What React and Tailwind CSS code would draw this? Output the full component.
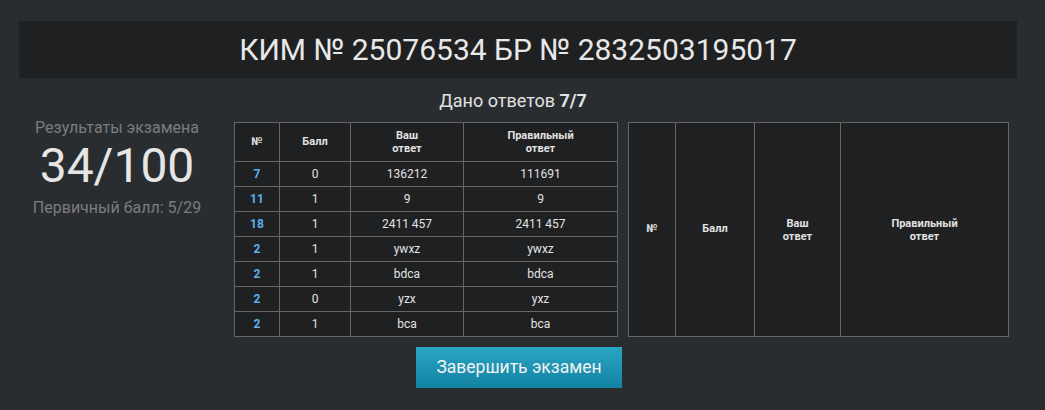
const rows = [
  { n: 7, score: 0, yours: '136212', right: '111691' },
  { n: 11, score: 1, yours: '9', right: '9' },
  { n: 18, score: 1, yours: '2411 457', right: '2411 457' },
  { n: 2, score: 1, yours: 'ywxz', right: 'ywxz' },
  { n: 2, score: 1, yours: 'bdca', right: 'bdca' },
  { n: 2, score: 0, yours: 'yzx', right: 'yxz' },
  { n: 2, score: 1, yours: 'bca', right: 'bca' },
];

function HeadCells() {
  return (
    <>
      <th className="border border-[#666] font-bold">№</th>
      <th className="border border-[#666] font-bold">Балл</th>
      <th className="border border-[#666] font-bold leading-[13px]">
        Ваш
        <br />
        ответ
      </th>
      <th className="border border-[#666] font-bold leading-[13px]">
        Правильный
        <br />
        ответ
      </th>
    </>
  );
}

function ResultTable({ data, widths }) {
  return (
    <table className="border-collapse bg-[#1f2022] text-[#e2e2e2] text-[11px] text-center table-fixed h-[215px]">
      <colgroup>
        {widths.map((w, i) => (
          <col key={i} style={{ width: w }} />
        ))}
      </colgroup>
      <thead>
        <tr className={data.length ? 'h-[39px]' : 'h-[214px]'}>
          <HeadCells />
        </tr>
      </thead>
      {data.length > 0 && (
        <tbody>
          {data.map((r, i) => (
            <tr key={i} className="h-[25px] text-[12px]">
              <td className="border border-[#666] font-bold text-[#5cb0ec]">{r.n}</td>
              <td className="border border-[#666]">{r.score}</td>
              <td className="border border-[#666]">{r.yours}</td>
              <td className="border border-[#666]">{r.right}</td>
            </tr>
          ))}
        </tbody>
      )}
    </table>
  );
}

export default function App() {
  return (
    <div
      className="w-[1045px] h-[410px] bg-[#2a2d2f] pt-[21px] px-[19px]"
      style={{ fontFamily: 'Roboto, "Liberation Sans", sans-serif' }}
    >
      <div className="w-[998px] h-[57px] bg-[#1f2022] flex items-center justify-center">
        <h1 className="text-[30px] text-[#e8e8e8] leading-none">КИМ № 25076534 БР № 2832503195017</h1>
      </div>

      <div className="w-[998px] h-[44px] pr-[10px] flex items-center justify-center text-[18px] text-[#e2e2e2]">
        Дано ответов&nbsp;<b>7/7</b>
      </div>

      <div className="flex">
        <div className="w-[196px] mr-[19px] flex flex-col items-center -mt-[4px]">
          <div className="text-[16px] text-[#7a7c7e] leading-[20px]">Результаты экзамена</div>
          <div className="text-[48px] text-[#e6e6e6] leading-[52px] mt-[2px]">34/100</div>
          <div className="text-[16px] text-[#7a7c7e] leading-[20px] mt-[6px]">Первичный балл: 5/29</div>
        </div>

        <div className="flex flex-col">
          <div className="flex gap-[10px] items-start">
            <ResultTable data={rows} widths={[45, 71, 113, 154]} />
            <ResultTable data={[]} widths={[47, 79, 86, 168]} />
          </div>
          <div className="flex mt-[10px] ml-[182px]">
            <button className="w-[206px] h-[41px] bg-gradient-to-b from-[#2aa5c4] to-[#1282a2] text-[17.5px] text-[#f2f2f2]">
              Завершить экзамен
            </button>
          </div>
        </div>
      </div>
    </div>
  );
}
